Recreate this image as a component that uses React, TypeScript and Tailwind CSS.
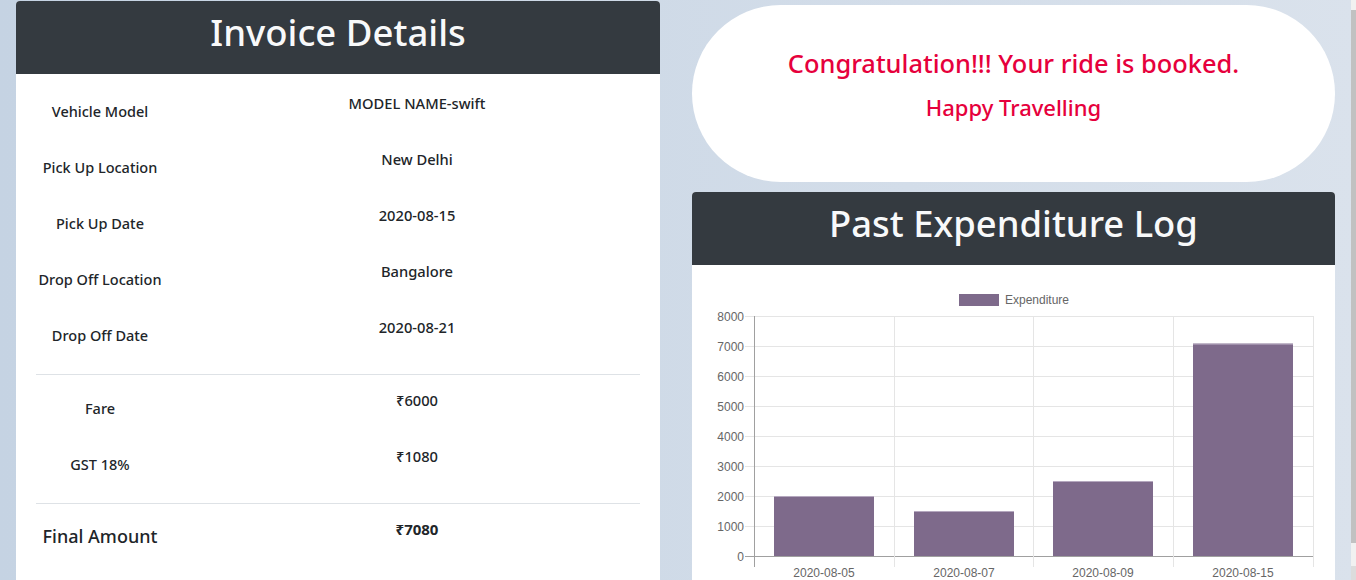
import { FC } from 'react';

type Row = { label: string; value: string };

const tripRows: Row[] = [
    { label: 'Vehicle Model', value: 'MODEL NAME-swift' },
    { label: 'Pick Up Location', value: 'New Delhi' },
    { label: 'Pick Up Date', value: '2020-08-15' },
    { label: 'Drop Off Location', value: 'Bangalore' },
    { label: 'Drop Off Date', value: '2020-08-21' }
];

const fareRows: Row[] = [
    { label: 'Fare', value: '₹6000' },
    { label: 'GST 18%', value: '₹1080' }
];

const expenses = [
    { date: '2020-08-05', amount: 2000 },
    { date: '2020-08-07', amount: 1500 },
    { date: '2020-08-09', amount: 2500 },
    { date: '2020-08-15', amount: 7080 }
];

const font = { fontFamily: '"Noto Sans", "Open Sans", sans-serif' };

const InvoiceRow: FC<Row> = ({ label, value }) => (
    <div className="flex h-[56px]">
        <div className="flex w-[128px] shrink-0 items-center justify-center pt-[2px] text-[14.5px] font-medium text-[#212529]">
            {label}
        </div>
        <div className="w-[506px] shrink-0 pt-[9px] text-center text-[14.7px] leading-[22px] font-medium text-[#212529]">
            {value}
        </div>
    </div>
);

const ExpenditureChart: FC = () => {
    const top = 291;
    const scale = 0.03;
    const ticks = [0, 1000, 2000, 3000, 4000, 5000, 6000, 7000, 8000];
    const cols = [62, 202, 341, 481, 621];

    return (
        <svg className="block" width={643} height={320} style={{ fontFamily: '"Liberation Sans", Arial, sans-serif' }}>
            <rect x={267} y={29} width={40} height={12} fill="#7e6a8b" />
            <text x={313} y={39} fontSize={12} fill="#666">
                Expenditure
            </text>
            {ticks.map((t) => {
                const y = top - t * scale + 0.5;
                return (
                    <g key={t}>
                        <line x1={53} x2={621} y1={y} y2={y} stroke={t === 0 ? '#a0a0a0' : '#e5e5e5'} />
                        <text x={52} y={y + 4} fontSize={12} fill="#666" textAnchor="end">
                            {t}
                        </text>
                    </g>
                );
            })}
            {cols.map((x, i) => (
                <line
                    key={x}
                    x1={x + 0.5}
                    x2={x + 0.5}
                    y1={51}
                    y2={302}
                    stroke={i === 0 ? '#a0a0a0' : '#e5e5e5'}
                />
            ))}
            {expenses.map((e, i) => {
                const h = e.amount * scale;
                const x = cols[i] + 20;
                return (
                    <g key={e.date}>
                        <rect x={x} y={top - h} width={100} height={h} fill="#7e6a8b" />
                        <line x1={x} x2={x + 100} y1={top - h + 0.5} y2={top - h + 0.5} stroke="#b5a8bf" />
                        <text x={x + 50} y={312} fontSize={12} fill="#666" textAnchor="middle">
                            {e.date}
                        </text>
                    </g>
                );
            })}
        </svg>
    );
};

export default function App() {
    return (
        <div className="flex h-[580px] w-full overflow-hidden bg-gradient-to-r from-[#c5d3e3] to-[#dae2ec]" style={font}>
            <div className="flex flex-1 items-start gap-[32px] pl-[16px]">
                <div className="mt-[1px] h-[600px] w-[644px] shrink-0 overflow-hidden rounded-t-[4px] bg-white">
                    <div className="flex h-[73px] items-center justify-center bg-[#343a40] pb-[12px]">
                        <h1 className="text-[36.5px] leading-[44px] font-medium text-[#f8f9fa]">Invoice Details</h1>
                    </div>
                    <div className="px-[20px] pt-[9px]">
                        {tripRows.map((r) => (
                            <InvoiceRow key={r.label} {...r} />
                        ))}
                        <div className="mt-[11px] mb-[5px] h-px bg-[#dee2e6]" />
                        {fareRows.map((r) => (
                            <InvoiceRow key={r.label} {...r} />
                        ))}
                        <div className="mt-[11px] h-px bg-[#dee2e6]" />
                        <div className="flex h-[66px]">
                            <div className="flex w-[128px] shrink-0 items-center justify-center pb-[2px] text-[18px] font-medium text-[#212529]">
                                Final Amount
                            </div>
                            <div className="w-[506px] shrink-0 pt-[14px] text-center text-[15px] leading-[22px] font-bold text-[#212529]">
                                ₹7080
                            </div>
                        </div>
                    </div>
                </div>

                <div className="mt-[5px] flex w-[643px] shrink-0 flex-col gap-[10px]">
                    <div className="flex h-[177px] flex-col items-center justify-center rounded-full bg-white pb-[20px]">
                        <p className="text-[25.4px] leading-[34px] font-medium text-[#e6003c]">
                            Congratulation!!! Your ride is booked.
                        </p>
                        <p className="mt-[12px] text-[22px] leading-[30px] font-medium text-[#e6003c]">Happy Travelling</p>
                    </div>
                    <div className="overflow-hidden rounded-t-[4px] bg-white">
                        <div className="flex h-[73px] items-center justify-center bg-[#343a40] pb-[12px]">
                            <h2 className="text-[36.4px] leading-[44px] font-medium text-[#f8f9fa]">Past Expenditure Log</h2>
                        </div>
                        <ExpenditureChart />
                    </div>
                </div>
            </div>

            <div className="flex w-[5px] shrink-0 flex-col bg-[#f1f1f1]">
                <div className="h-[10px]" />
                <div className="h-[533px] bg-[#c1c1c1]" />
                <div className="flex-1" />
                <div className="h-[14px] bg-[#dcdcdc]" />
            </div>
        </div>
    );
}
